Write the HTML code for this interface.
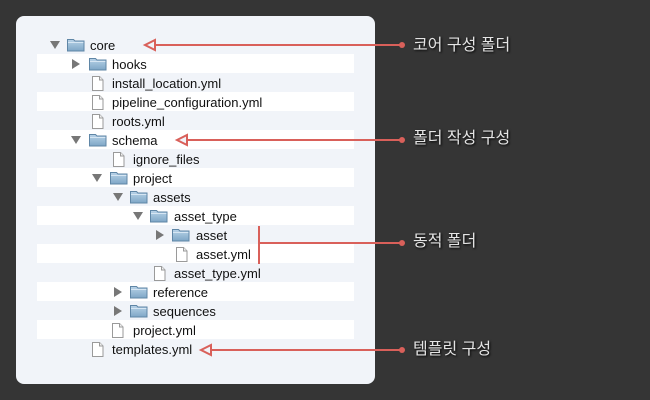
<!DOCTYPE html>
<html><head><meta charset="utf-8"><style>
body{margin:0;width:650px;height:400px;background:#353535;position:relative;overflow:hidden;font-family:"Lucida Grande","Liberation Sans",sans-serif}
.panel{position:absolute;left:16px;top:16px;width:359px;height:368px;background:#f1f4f9;border-radius:8px}
.stripe{position:absolute;left:37px;width:317px;height:19px;background:#fff}
.t{position:absolute;font-size:13px;color:#111;line-height:19px;height:19px}
.lbl{position:absolute;left:413px;font-family:"Liberation Sans","Noto Sans CJK KR",sans-serif;font-size:16px;color:#e4e4e4;text-shadow:1px 1px 2px #000;line-height:20px}
svg{position:absolute}
</style></head><body>
<div class="panel"></div>
<div class="stripe" style="top:54px"></div>
<div class="stripe" style="top:92px"></div>
<div class="stripe" style="top:130px"></div>
<div class="stripe" style="top:168px"></div>
<div class="stripe" style="top:206px"></div>
<div class="stripe" style="top:244px"></div>
<div class="stripe" style="top:282px"></div>
<div class="stripe" style="top:320px"></div>
<svg width="650" height="400" style="left:0;top:0">
<defs>
<linearGradient id="fg" x1="0" y1="0" x2="0" y2="1"><stop offset="0" stop-color="#b9d3e8"/><stop offset="1" stop-color="#7ea6c6"/></linearGradient>
<g id="fold"><path d="M0.5 2.5h6l1.5 1.5h9v10h-16.5z" fill="url(#fg)" stroke="#5f86a6"/><path d="M1 5.5h15.5" stroke="#d6e6f3"/></g>
<g id="file"><path d="M0.5 0.5h7l3.5 3.5v10.5h-10.5z" fill="#fff" stroke="#9a9a9a"/><path d="M7.5 0.5v3.5h3.5" fill="#eee" stroke="#9a9a9a"/></g>
<path id="down" d="M0 0h10l-5 8z" fill="#777"/>
<path id="right" d="M0 0l8 5l-8 5z" fill="#777"/>
</defs>
<use href="#down" x="50" y="41"/><use href="#fold" x="67" y="37"/>
<use href="#right" x="72" y="59"/><use href="#fold" x="89" y="56"/>
<use href="#file" x="92" y="76"/>
<use href="#file" x="92" y="95"/>
<use href="#file" x="92" y="114"/>
<use href="#down" x="71" y="136"/><use href="#fold" x="89" y="132"/>
<use href="#file" x="113" y="152"/>
<use href="#down" x="92" y="174"/><use href="#fold" x="110" y="170"/>
<use href="#down" x="113" y="193"/><use href="#fold" x="130" y="189"/>
<use href="#down" x="133" y="212"/><use href="#fold" x="150" y="208"/>
<use href="#right" x="156" y="230"/><use href="#fold" x="172" y="227"/>
<use href="#file" x="176" y="247"/>
<use href="#file" x="154" y="266"/>
<use href="#right" x="114" y="287"/><use href="#fold" x="130" y="284"/>
<use href="#right" x="114" y="306"/><use href="#fold" x="130" y="303"/>
<use href="#file" x="112" y="323"/>
<use href="#file" x="92" y="342"/>
<g stroke="#d9605a" stroke-width="2" fill="none">
<path d="M155 45H401"/><path d="M145 45l10-5v10z" fill="#f1f4f9"/>
<path d="M187 140H401"/><path d="M177 140l10-5v10z" fill="#f1f4f9"/>
<path d="M259 226V264M259 243H401"/>
<path d="M211 350H401"/><path d="M201 350l10-5v10z" fill="#f1f4f9"/>
</g>
<g fill="#d9605a"><circle cx="402" cy="45" r="3"/><circle cx="402" cy="140" r="3"/><circle cx="402" cy="243" r="3"/><circle cx="402" cy="350" r="3"/></g>
</svg>
<div class="t" style="left:90px;top:36px">core</div>
<div class="t" style="left:112px;top:55px">hooks</div>
<div class="t" style="left:112px;top:74px">install_location.yml</div>
<div class="t" style="left:112px;top:93px">pipeline_configuration.yml</div>
<div class="t" style="left:112px;top:112px">roots.yml</div>
<div class="t" style="left:112px;top:131px">schema</div>
<div class="t" style="left:133px;top:150px">ignore_files</div>
<div class="t" style="left:133px;top:169px">project</div>
<div class="t" style="left:153px;top:188px">assets</div>
<div class="t" style="left:174px;top:207px">asset_type</div>
<div class="t" style="left:196px;top:226px">asset</div>
<div class="t" style="left:196px;top:245px">asset.yml</div>
<div class="t" style="left:174px;top:264px">asset_type.yml</div>
<div class="t" style="left:153px;top:283px">reference</div>
<div class="t" style="left:153px;top:302px">sequences</div>
<div class="t" style="left:133px;top:321px">project.yml</div>
<div class="t" style="left:112px;top:340px">templates.yml</div>
<div class="lbl" style="top:36px">코어 구성 폴더</div>
<div class="lbl" style="top:129px">폴더 작성 구성</div>
<div class="lbl" style="top:232px">동적 폴더</div>
<div class="lbl" style="top:340px">템플릿 구성</div>
</body></html>
